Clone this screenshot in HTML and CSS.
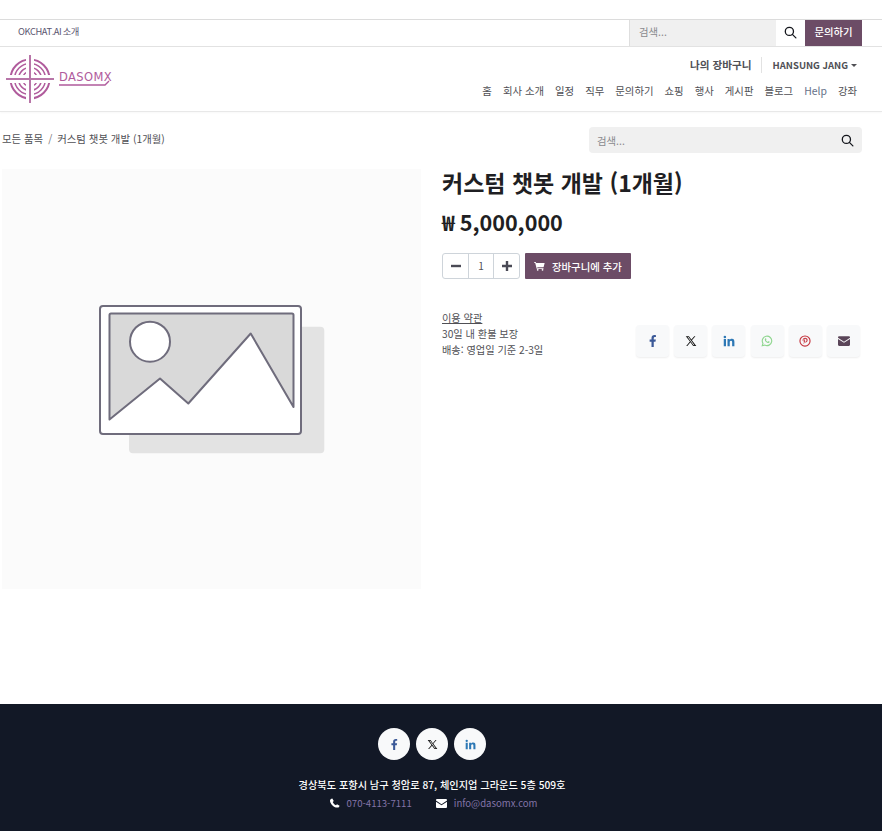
FILE: index.html
```html
<!DOCTYPE html>
<html lang="ko">
<head>
  <meta charset="UTF-8">
  <title>커스텀 챗봇 개발 (1개월) - DASOMX</title>
  <meta name="viewport" content="width=device-width, initial-scale=1">
  <link rel="stylesheet" href="styles.css">
</head>
<body>
  <div class="topbar">
    <a class="topbar-link" href="#">OKCHAT.AI 소개</a>
    <div class="topbar-right">
      <div class="topbar-search">
        <span class="placeholder">검색...</span>
      </div>
      <span class="topbar-icon">
        <svg class="icon-search" viewBox="0 0 14 14"><circle cx="5.8" cy="5.8" r="4.4"/><path d="M9 9l3.8 3.8"/></svg>
      </span>
      <a class="topbar-btn" href="#">문의하기</a>
    </div>
  </div>

  <header class="header">
    <a class="logo" href="#">
      <svg class="logo-mark" viewBox="0 0 48 48">
        <g fill="none" stroke="#b05b9c" stroke-width="1.5">
          <circle cx="24" cy="24" r="19.500" stroke-width="2"/>
          <circle cx="24" cy="24" r="15.500"/>
          <circle cx="24" cy="24" r="11.500"/>
          <circle cx="24" cy="24" r="7.500"/>
        </g>
        <path fill="#fff" d="M20 0h8v48h-8zM0 20h48v8H0z"/>
        <path fill="#b875a8" d="M23 0h2v48h-2zM0 23h48v2H0z"/>
      </svg>
      <span class="logo-word">
        <span class="logo-text">DASOMX</span>
        <svg class="logo-line" viewBox="0 0 53 6"><path d="M0 5h46l4-4"/></svg>
      </span>
    </a>
    <div class="header-right">
      <div class="header-user">
        <a class="cart-link" href="#">나의 장바구니</a>
        <a class="user-link" href="#">HANSUNG JANG<span class="caret"></span></a>
      </div>
      <nav class="nav">
        <a href="#">홈</a>
        <a href="#">회사 소개</a>
        <a href="#">일정</a>
        <a href="#">직무</a>
        <a href="#">문의하기</a>
        <a href="#">쇼핑</a>
        <a href="#">행사</a>
        <a href="#">게시판</a>
        <a href="#">블로그</a>
        <a class="nav-help" href="#">Help</a>
        <a href="#">강좌</a>
      </nav>
    </div>
  </header>

  <main class="main">
    <div class="crumbs-row">
      <div class="crumbs">
        <a href="#">모든 품목</a>
        <span class="crumb-sep">/</span>
        <span>커스텀 챗봇 개발 (1개월)</span>
      </div>
      <div class="product-search">
        <span class="placeholder">검색...</span>
        <svg class="icon-search" viewBox="0 0 14 14"><circle cx="5.8" cy="5.8" r="4.4"/><path d="M9 9l3.8 3.8"/></svg>
      </div>
    </div>

    <div class="product">
      <div class="product-image">
        <svg class="placeholder-art" viewBox="0 0 228 152">
          <rect x="30" y="21.700" width="195.300" height="126.600" rx="4" fill="#e3e3e3"/>
          <rect x="1" y="1" width="201" height="128" rx="3" fill="#fff" stroke="#6f6c7c" stroke-width="2"/>
          <path d="M10.500 10a1.500 1.500 0 0 1 1.500-1.500h181a1.500 1.500 0 0 1 1.500 1.500v92L151.700 28.500 89.300 98.500 61 73.500 10.500 114.500z" fill="#d9d9d9" stroke="#6f6c7c" stroke-width="2" stroke-linejoin="round"/>
          <circle cx="51" cy="36.700" r="20" fill="#fff" stroke="#6f6c7c" stroke-width="2"/>
        </svg>
      </div>

      <div class="product-info">
        <h1 class="product-title">커스텀 챗봇 개발 (1개월)</h1>
        <div class="product-price">₩ 5,000,000</div>

        <div class="buy-row">
          <div class="qty">
            <span class="qty-btn"><svg viewBox="0 0 10 10"><path d="M0 3.800h10v2.400H0z"/></svg></span>
            <span class="qty-val">1</span>
            <span class="qty-btn"><svg viewBox="0 0 10 10"><path d="M3.800 0h2.400v3.800H10v2.400H6.200V10H3.800V6.200H0V3.800h3.800z"/></svg></span>
          </div>
          <a class="add-cart" href="#">
            <svg viewBox="0 0 16 14"><path fill="#fff" d="M0 1h2.600l.5 1.600H15.500L14 8.400H4.700l.3 1.300h8.800v1.300H3.900L1.700 2.300H0z"/><circle cx="5.400" cy="12.500" r="1.300" fill="#fff"/><circle cx="12.400" cy="12.500" r="1.300" fill="#fff"/></svg>
            장바구니에 추가
          </a>
        </div>

        <div class="terms-row">
          <div class="terms">
            <a href="#">이용 약관</a>
            <div>30일 내 환불 보장</div>
            <div>배송: 영업일 기준 2-3일</div>
          </div>
          <div class="share">
            <a href="#"><svg class="ic-fb" viewBox="0 0 10 16"><path d="M3 16V9H.5V6H3V4c0-2.600 1.500-4 3.900-4 1 0 2 .2 2 .2v2.500H7.600C6.400 2.700 6 3.500 6 4.300V6h2.800l-.5 3H6v7z"/></svg></a>
            <a href="#"><svg class="ic-x" viewBox="0 0 16 16"><path d="M1 1.500h4.200l3.300 4.500 3.900-4.500h1.500L9.200 6.900l5.900 7.600h-4.200L7.300 9.700l-4.200 4.800H1.600l5-5.700zm2.400 1 8.100 11h1.200l-8.100-11z"/></svg></a>
            <a href="#"><svg class="ic-in" viewBox="0 0 16 16"><path d="M1 5.300h3V15H1zM2.500 1a1.700 1.700 0 1 1 0 3.400 1.700 1.700 0 0 1 0-3.400zM6 5.300h2.900v1.300c.5-.9 1.600-1.600 3-1.600 2.900 0 3.300 1.900 3.300 4.400V15h-3v-5c0-1.200 0-2.500-1.500-2.500S9 8.700 9 10v5H6z"/></svg></a>
            <a href="#"><svg class="ic-wa" viewBox="0 0 16 16"><path fill="none" stroke="#8fd68f" stroke-width="1.500" d="M1.700 14.300l.9-3.200A6.300 6.300 0 1 1 5 13.400z"/><path fill="#8fd68f" d="M5.700 4.600c.5-.4.900-.3 1.100.2l.4 1c.1.300 0 .5-.4 1-.1.200-.1.300 0 .5.500.8 1.100 1.300 1.900 1.700.2.100.3 0 .4-.1.600-.7.700-.7 1-.6l1.100.5c.4.200.4.500.2 1-.4.800-1.400 1-2.300.7-2.200-.7-3.700-2.300-4-4-.1-.8.100-1.500.6-1.900z"/></svg></a>
            <a href="#"><svg class="ic-pin" viewBox="0 0 16 16"><path fill-rule="evenodd" d="M8 .5a7.500 7.500 0 1 1 0 15 7.500 7.500 0 0 1 0-15zM8 2a6 6 0 1 0 0 12A6 6 0 0 0 8 2z"/><path d="M8.300 3.800c-2.300 0-3.500 1.500-3.500 3.100 0 .8.400 1.500 1 1.800.2.100.3 0 .4-.3.100-.3.100-.4-.1-.6-.8-1 -.2-2.900 2.100-2.900 2.500 0 2.300 4.100.4 4.100-.6 0-.9-.4-.8-.9.200-.6.500-1.200.5-1.700 0-1.100-1.500-.9-1.500.5 0 .5.200.7.200.7l-.8 3.300c-.1.400 0 1 0 1.200h.1c.1 0 .6-.8.800-1.400l.4-1.300c.2.400.7.600 1.200.6 1.700 0 2.800-1.500 2.800-3.400 0-1.500-1.300-2.800-3.200-2.800z"/></svg></a>
            <a href="#"><svg class="ic-mail" viewBox="0 0 16 13"><path d="M1.500 0h13A1.500 1.500 0 0 1 16 1.500v.8L8 7.500 0 2.300v-.8A1.500 1.500 0 0 1 1.500 0zM0 3.800l8 5.100 8-5.100v7.700a1.500 1.500 0 0 1-1.500 1.500h-13A1.500 1.500 0 0 1 0 11.500z"/></svg></a>
          </div>
        </div>
      </div>
    </div>
  </main>

  <footer class="footer">
    <div class="footer-social">
      <a href="#"><svg class="ic-fb" viewBox="0 0 10 16"><path d="M3 16V9H.5V6H3V4c0-2.600 1.500-4 3.900-4 1 0 2 .2 2 .2v2.500H7.600C6.400 2.700 6 3.500 6 4.300V6h2.800l-.5 3H6v7z"/></svg></a>
      <a href="#"><svg class="ic-x" viewBox="0 0 16 16"><path d="M1 1.500h4.200l3.300 4.500 3.900-4.500h1.500L9.200 6.900l5.900 7.600h-4.200L7.300 9.700l-4.200 4.800H1.600l5-5.700zm2.400 1 8.100 11h1.200l-8.100-11z"/></svg></a>
      <a href="#"><svg class="ic-in" viewBox="0 0 16 16"><path d="M1 5.300h3V15H1zM2.500 1a1.700 1.700 0 1 1 0 3.400 1.700 1.700 0 0 1 0-3.400zM6 5.300h2.900v1.300c.5-.9 1.600-1.600 3-1.600 2.900 0 3.300 1.900 3.300 4.400V15h-3v-5c0-1.200 0-2.500-1.500-2.500S9 8.700 9 10v5H6z"/></svg></a>
    </div>
    <div class="footer-address">경상북도 포항시 남구 청암로 87, 체인지업 그라운드 5층 509호</div>
    <div class="footer-contact">
      <span class="contact-item">
        <svg class="contact-phone" viewBox="0 0 12 12"><path fill="#fff" d="M2.800.5 4.500 3.600 3.300 4.800c.6 1.500 2.300 3.300 3.900 3.900l1.200-1.200 3.100 1.700c-.3 1.500-1.300 2.300-2.400 2.300C4.700 12 .2 7 0 3.300 0 2 1.200.7 2.800.5z"/></svg>
        <a href="#">070-4113-7111</a>
      </span>
      <span class="contact-item">
        <svg class="contact-mail" viewBox="0 0 16 13"><path fill="#fff" d="M1.500 0h13A1.500 1.500 0 0 1 16 1.500v.8L8 7.500 0 2.300v-.8A1.500 1.500 0 0 1 1.500 0zM0 3.800l8 5.100 8-5.100v7.700a1.500 1.500 0 0 1-1.500 1.500h-13A1.500 1.500 0 0 1 0 11.500z"/></svg>
        <a href="#">info@dasomx.com</a>
      </span>
    </div>
  </footer>
</body>
</html>
```

FILE: styles.css
```css
* {
  box-sizing: border-box;
}
html, body {
  margin: 0;
  padding: 0;
}
body {
  font-family: "Noto Sans CJK KR", "Noto Sans", sans-serif;
  font-size: 10.400px;
  color: #505055;
  background: #fff;
  padding-top: 19px;
  height: 831px;
  overflow: hidden;
  display: flex;
  flex-direction: column;
}
a {
  color: inherit;
  text-decoration: none;
}
.icon-search {
  width: 13px;
  height: 13px;
  fill: none;
  stroke: #14161c;
  stroke-width: 1.4;
  stroke-linecap: round;
}
.placeholder {
  color: #8a8a8e;
}

/* top bar */
.topbar {
  height: 28px;
  border-top: 1px solid #dcdcdc;
  border-bottom: 1px solid #e2e2e2;
  display: flex;
  align-items: stretch;
  justify-content: space-between;
  padding-left: 18px;
  padding-right: 20px;
}
.topbar-link {
  font-size: 9.300px;
  letter-spacing: -0.4px;
  word-spacing: -1px;
  line-height: 23px;
  color: #5b5670;
}
.topbar-right {
  display: flex;
}
.topbar-search {
  width: 147px;
  background: #f0f0f0;
  border-left: 1px solid #dedede;
  padding-left: 9px;
  line-height: 24px;
}
.topbar-icon {
  width: 29px;
  display: flex;
  align-items: center;
  justify-content: center;
  padding-bottom: 2px;
}
.topbar-btn {
  width: 57px;
  background: #6c4c66;
  color: #fff;
  text-align: center;
  line-height: 24px;
  font-weight: 500;
}

/* header */
.header {
  height: 65px;
  border-bottom: 1px solid #e8e8e8;
  box-shadow: 0 1px 2px rgba(0,0,0,0.03);
  display: flex;
  justify-content: space-between;
  padding-left: 6px;
  padding-right: 25px;
}
.logo {
  display: flex;
  align-items: flex-start;
  gap: 5px;
  padding-top: 8px;
}
.logo-mark {
  width: 48px;
  height: 48px;
}
.logo-word {
  display: flex;
  flex-direction: column;
  margin-top: 15px;
}
.logo-text {
  font-family: "DejaVu Sans", sans-serif;
  font-size: 11.500px;
  line-height: 15px;
  letter-spacing: 0.4px;
  color: #b05b9c;
}
.logo-line {
  width: 53px;
  height: 6px;
  margin-top: -5px;
  fill: none;
  stroke: #b05b9c;
  stroke-width: 1.400;
}
.header-right {
  display: flex;
  flex-direction: column;
  align-items: flex-end;
}
.header-user {
  display: flex;
  align-items: center;
  height: 16px;
  margin-top: 10px;
}
.cart-link {
  font-size: 10.600px;
  font-weight: 700;
  padding-right: 9px;
  border-right: 1px solid #e2e2e2;
  line-height: 16px;
}
.user-link {
  font-weight: 700;
  font-size: 9.500px;
  padding-left: 11px;
}
.caret {
  display: inline-block;
  margin-left: 3px;
  vertical-align: 2px;
  border-top: 3px solid #505055;
  border-left: 3px solid transparent;
  border-right: 3px solid transparent;
}
.nav {
  display: flex;
  gap: 11px;
  margin-top: 10px;
  line-height: 16px;
}
.nav-help {
  color: #667088;
}

/* product */
.main {
  flex: 1;
  padding-left: 2px;
  padding-right: 20px;
}
.crumbs-row {
  display: flex;
  justify-content: space-between;
  align-items: center;
  margin-top: 15px;
  height: 26px;
}
.crumbs {
  display: flex;
  gap: 5px;
  padding-bottom: 4px;
}
.crumb-sep {
  color: #777;
}
.product-search {
  width: 273px;
  height: 26px;
  background: #f0f0f0;
  border-radius: 4px;
  display: flex;
  align-items: center;
  justify-content: space-between;
  padding-left: 8px;
  padding-right: 8px;
}
.product {
  display: flex;
  margin-top: 16px;
  gap: 21px;
}
.product-image {
  width: 419px;
  height: 420px;
  background: #fbfbfb;
  display: flex;
  align-items: center;
  justify-content: center;
}
.placeholder-art {
  width: 228px;
  height: 152px;
  margin-left: 3px;
  margin-top: 4px;
}
.product-info {
  flex: 1;
}
.product-title {
  margin: -1px 0 0;
  font-size: 23px;
  line-height: 29px;
  font-weight: 700;
  color: #1f1f23;
}
.product-price {
  margin-top: 11px;
  font-size: 21.600px;
  line-height: 28px;
  font-weight: 700;
  color: #1f1f23;
}
.buy-row {
  display: flex;
  gap: 5px;
  margin-top: 17px;
}
.qty {
  display: flex;
  width: 78px;
  height: 26px;
  border: 1px solid #ced4da;
  border-radius: 3px;
}
.qty-btn {
  width: 25px;
  display: flex;
  align-items: center;
  justify-content: center;
}
.qty-btn svg {
  width: 10px;
  height: 10px;
  fill: #4a4a55;
}
.qty-val {
  width: 26px;
  border-left: 1px solid #ced4da;
  border-right: 1px solid #ced4da;
  text-align: center;
  font-size: 10px;
  line-height: 24px;
}
.add-cart {
  display: flex;
  align-items: center;
  gap: 7px;
  height: 26px;
  width: 106px;
  padding-left: 9px;
  background: #6c4c66;
  color: #fff;
  font-weight: 500;
  border-radius: 1px;
}
.add-cart svg {
  width: 11px;
  height: 10px;
}
.terms-row {
  display: flex;
  justify-content: space-between;
  align-items: flex-start;
  margin-top: 31px;
}
.terms {
  font-size: 10.200px;
  line-height: 16px;
}
.terms a {
  text-decoration: underline;
}
.share {
  display: flex;
  gap: 5.200px;
  margin-top: 15px;
  margin-right: 2px;
}
.share a {
  width: 33px;
  height: 32px;
  background: #f8f9fa;
  border-radius: 4px;
  box-shadow: 0 1px 2px rgba(0,0,0,0.07);
  display: flex;
  align-items: center;
  justify-content: center;
}
.share svg {
  height: 12px;
  width: 12px;
}
.ic-fb { fill: #3b5998; }
.ic-x { fill: #111; }
.ic-in { fill: #2d78b5; }
.ic-pin { fill: #c4323c; }
.ic-mail { fill: #5a4558; }

/* footer */
.footer {
  height: 127px;
  background: #121826;
  display: flex;
  flex-direction: column;
  align-items: center;
  padding-top: 24px;
  padding-right: 18px;
}
.footer-social {
  display: flex;
  gap: 6px;
}
.footer-social a {
  width: 32px;
  height: 32px;
  border-radius: 50%;
  background: #f8f9fa;
  display: flex;
  align-items: center;
  justify-content: center;
}
.footer-social svg {
  width: 11px;
  height: 11px;
}
.footer-address {
  margin-top: 16px;
  color: #fff;
  font-size: 10.200px;
  font-weight: 500;
  line-height: 18px;
}
.footer-contact {
  display: flex;
  gap: 24px;
  margin-left: 3px;
  line-height: 18px;
  font-size: 9.600px;
}
.contact-item {
  display: flex;
  align-items: center;
  gap: 7px;
  color: #8274a6;
}
.contact-phone {
  width: 10px;
  height: 10px;
}
.contact-mail {
  width: 11px;
  height: 9px;
}
```
